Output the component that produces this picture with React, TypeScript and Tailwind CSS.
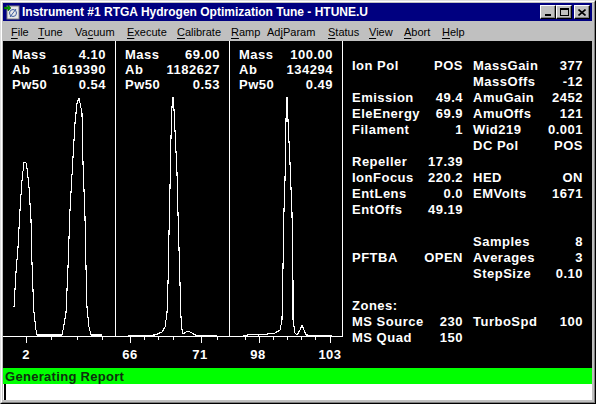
import React from "react";

const font = { fontFamily: '"Liberation Sans", Arial, sans-serif' };

const menus: [string, string, string, number][] = [
  ["", "F", "ile", 27],
  ["", "T", "une", 37],
  ["Va", "c", "uum", 52],
  ["", "E", "xecute", 50],
  ["", "C", "alibrate", 54],
  ["", "R", "amp", 36],
  ["Ad", "j", "Param", 61],
  ["", "S", "tatus", 41],
  ["", "V", "iew", 35],
  ["", "A", "bort", 38],
  ["", "H", "elp", 30],
];

const panels = [
  { mass: "4.10", ab: "1619390", pw: "0.54", w: "w-[113px]" },
  { mass: "69.00", ab: "1182627", pw: "0.53", w: "w-[114px]" },
  { mass: "100.00", ab: "134294", pw: "0.49", w: "w-[113px]" },
];

// left label, left value, right label, right value
const rows: [string, string, string, string][] = [
  ["Ion Pol", "POS", "MassGain", "377"],
  ["", "", "MassOffs", "-12"],
  ["Emission", "49.4", "AmuGain", "2452"],
  ["EleEnergy", "69.9", "AmuOffs", "121"],
  ["Filament", "1", "Wid219", "0.001"],
  ["", "", "DC Pol", "POS"],
  ["Repeller", "17.39", "", ""],
  ["IonFocus", "220.2", "HED", "ON"],
  ["EntLens", "0.0", "EMVolts", "1671"],
  ["EntOffs", "49.19", "", ""],
  ["", "", "", ""],
  ["", "", "Samples", "8"],
  ["PFTBA", "OPEN", "Averages", "3"],
  ["", "", "StepSize", "0.10"],
  ["", "", "", ""],
  ["Zones:", "", "", ""],
  ["MS Source", "230", "TurboSpd", "100"],
  ["MS Quad", "150", "", ""],
];

const peak1 =
  "14,307 16,272 18,247 20,210 22,180 24,162 26,163 27,168 29,187 31,220 32,263 33,290 34,313 36,330 37,335 62,335 63,330 66,313 68,267 70,210 73,157 75,123 77,103 79,98 82,113 83,163 85,217 86,267 87,307 89,327 91,335 102,335";
const peak2 =
  "128,336 155,335 162,332 165,327 167,313 168,283 169,233 170,187 171,137 172,107 173,97 174,110 177,173 178,213 180,283 181,317 182,330 183,334 186,332 188,331 192,333 195,335 217,336";
const peak3 =
  "243,336 252,334 258,335 268,334 275,333 280,330 282,320 283,267 284,210 285,180 286,120 287,97 288,120 290,163 292,213 293,283 293,320 295,333 297,335 300,330 302,325 304,330 306,335 332,336";

const majorTicks = [26, 130, 201, 259, 330];
const minorTicks = [51, 77, 102, 144, 158, 173, 217, 245, 273, 287, 301, 315];
const labels: [number, string][] = [
  [26, "2"],
  [130, "66"],
  [200, "71"],
  [258, "98"],
  [330, "103"],
];

function CapButton({ children }: { children: React.ReactNode }) {
  return (
    <div className="flex h-[14px] w-[16px] items-center justify-center border-t border-l border-white border-r border-b border-r-black border-b-black bg-[#c0c0c0] shadow-[inset_-1px_-1px_0_#808080]">
      {children}
    </div>
  );
}

function TitleIcon() {
  return (
    <svg width="16" height="16" viewBox="0 0 16 16">
      <rect x="3" y="2" width="12" height="13" fill="#e8e8e8" stroke="#808080" />
      <circle cx="9" cy="9" r="3.5" fill="none" stroke="#4060a0" />
      <line x1="6" y1="13" x2="12" y2="5" stroke="#4060a0" />
      <path d="M0 3 H4 V1 L7 4 L4 7 V5 H0 Z" fill="#00a000" stroke="#004000" strokeWidth="0.5" />
    </svg>
  );
}

function Plot() {
  return (
    <div className="relative h-full w-[340px]">
      <svg
        className="absolute inset-0"
        width="340"
        height="327"
        viewBox="3 41 340 327"
        shapeRendering="crispEdges"
      >
        <line x1="115.5" y1="41" x2="115.5" y2="336" stroke="white" />
        <line x1="229.5" y1="41" x2="229.5" y2="336" stroke="white" />
        <line x1="342.5" y1="41" x2="342.5" y2="336" stroke="white" />
        <line x1="3" y1="336.5" x2="343" y2="336.5" stroke="white" />
        {majorTicks.map((x) => (
          <line key={x} x1={x + 0.5} y1="336" x2={x + 0.5} y2="343" stroke="white" />
        ))}
        {minorTicks.map((x) => (
          <line key={x} x1={x + 0.5} y1="336" x2={x + 0.5} y2="340" stroke="white" />
        ))}
        <g fill="none" stroke="white" strokeWidth="1.1" strokeLinejoin="round">
          <polyline points={peak1} />
          <polyline points={peak2} />
          <polyline points={peak3} />
        </g>
        {labels.map(([x, t]) => (
          <text
            key={t}
            x={x}
            y="359"
            textAnchor="middle"
            fill="white"
            fontSize="13"
            fontWeight="bold"
            letterSpacing="0.5"
            fontFamily='"Liberation Sans", Arial, sans-serif'
            shapeRendering="auto"
          >
            {t}
          </text>
        ))}
      </svg>
      <div className="relative flex pt-[6px] text-[13px] font-bold leading-[15px] tracking-[0.5px] text-white">
        {panels.map((p) => (
          <div key={p.mass} className={`${p.w} pl-[9px] pr-[10px]`}>
            <div className="flex justify-between">
              <span>Mass</span>
              <span>{p.mass}</span>
            </div>
            <div className="flex justify-between">
              <span>Ab</span>
              <span>{p.ab}</span>
            </div>
            <div className="flex justify-between">
              <span>Pw50</span>
              <span>{p.pw}</span>
            </div>
          </div>
        ))}
      </div>
    </div>
  );
}

function Params() {
  return (
    <div className="w-[249px] pl-[9px] pt-[17px] text-[13px] font-bold leading-[16px] tracking-[0.5px] text-white">
      {rows.map((r, i) => (
        <div key={i} className="flex h-[16px]">
          <div className="flex w-[111px] justify-between">
            <span>{r[0]}</span>
            <span>{r[1]}</span>
          </div>
          <div className="ml-[10px] flex w-[110px] justify-between">
            <span>{r[2]}</span>
            <span>{r[3]}</span>
          </div>
        </div>
      ))}
    </div>
  );
}

export default function App() {
  return (
    <div
      style={font}
      className="h-[404px] w-[596px] overflow-hidden border-t border-l border-[#dfdfdf] border-r-black border-b-black border-r border-b bg-[#c0c0c0]"
    >
      <div className="flex h-full flex-col border-t border-l border-white border-r border-b border-r-[#808080] border-b-[#808080] pt-[1px] pl-[1px] pr-[2px] pb-[2px]">
        {/* title bar */}
        <div className="flex h-[18px] items-center bg-[#000080] pl-[1px] pr-[2px]">
          <TitleIcon />
          <span className="ml-[2px] text-[12px] font-bold leading-none text-white">
            Instrument #1 RTGA Hydrogen Optimization Tune - HTUNE.U
          </span>
          <div className="ml-auto flex items-center">
            <CapButton>
              <div className="mt-[6px] h-[2px] w-[6px] bg-black" />
            </CapButton>
            <CapButton>
              <div className="h-[8px] w-[9px] border border-t-2 border-black" />
            </CapButton>
            <div className="w-[2px]" />
            <CapButton>
              <svg width="8" height="7" viewBox="0 0 8 7">
                <path d="M0.5 0.5 L7.5 6.5 M7.5 0.5 L0.5 6.5" stroke="black" strokeWidth="1.6" />
              </svg>
            </CapButton>
          </div>
        </div>

        {/* menu bar */}
        <div className="flex h-[20px] items-center pl-[8px] pt-[2px] text-[11px] leading-none text-black">
          {menus.map(([a, u, b, w]) => (
            <span key={a + u + b} style={{ width: w }} className="shrink-0">
              {a}
              <span className="underline underline-offset-2 [text-decoration-skip-ink:none]">{u}</span>
              {b}
            </span>
          ))}
        </div>

        {/* client area */}
        <div className="flex h-[327px] bg-black">
          <Plot />
          <Params />
        </div>

        {/* status */}
        <div className="flex h-[16px] items-center bg-[#00ff00] pl-[2px] text-[13px] font-bold leading-none tracking-[0.3px] text-[#0e300e]">
          Generating Report
        </div>
        <div className="flex h-[16px] bg-white">
          <div className="ml-[1px] h-full w-[2px] bg-black" />
        </div>
      </div>
    </div>
  );
}
